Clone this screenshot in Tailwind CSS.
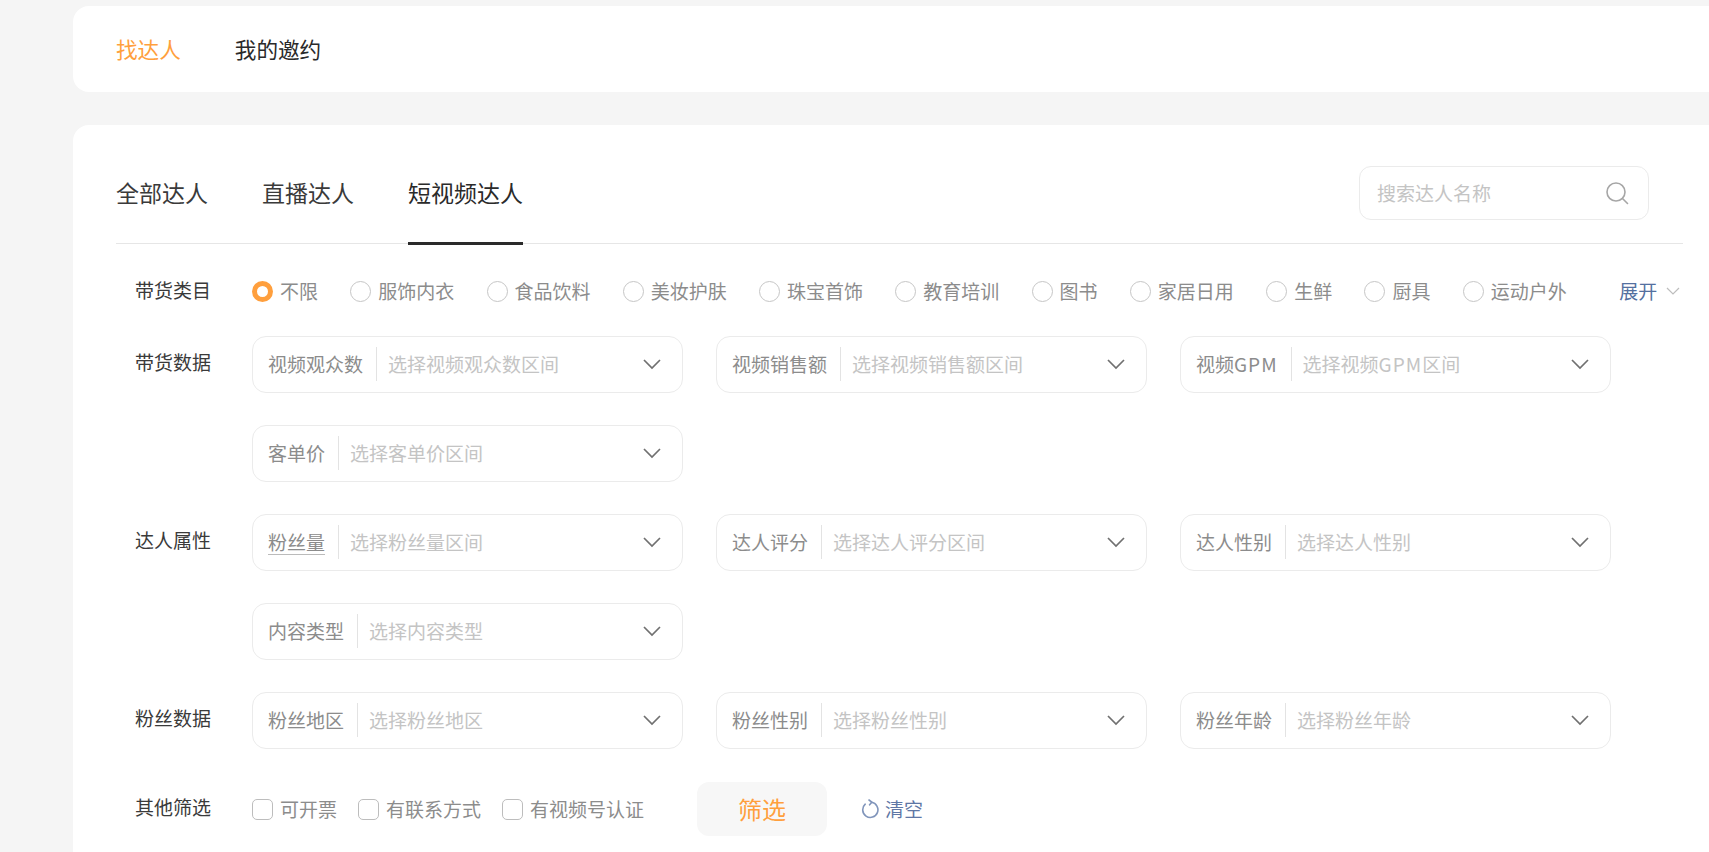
<!DOCTYPE html>
<html lang="zh">
<head>
<meta charset="utf-8">
<script src="https://cdn.jsdelivr.net/npm/@tailwindcss/browser@4"></script>
</head>
<body class="h-[852px] overflow-hidden bg-[#f5f5f5] font-['Noto_Sans_CJK_SC','Noto_Sans',sans-serif]">
<div class="h-full pl-[73px] pt-[6px] flex flex-col gap-[33px]">
  <!-- top tabs -->
  <div class="h-[86px] shrink-0 bg-white rounded-l-[16px] pl-[43px] flex items-center gap-[54px] text-[21.6px] leading-none">
    <span class="text-[#ff9f3d]">找达人</span>
    <span class="text-[#2a2a2a]">我的邀约</span>
  </div>
  <!-- main card -->
  <div class="flex-1 min-h-0 bg-white rounded-tl-[16px] pl-[43px] pt-[41px]">
    <div class="w-[1567px] h-[78px] border-b border-[#e6e6e6] flex items-start relative">
      <div class="flex gap-[54px] text-[23px] leading-[52px] text-[#3a3a3a]">
        <span>全部达人</span>
        <span>直播达人</span>
        <span class="relative text-[#2a2a2a] h-[78px]">短视频达人<span class="absolute left-0 right-0 bottom-[-1px] h-[3px] bg-[#2a2a2a]"></span></span>
      </div>
      <div class="ml-auto mr-[34px] w-[290px] h-[54px] border border-[#ebebeb] rounded-[12px] flex items-center justify-between pl-[17px] pr-[19px] text-[19px] text-[#c4c4c4]">
        <span>搜索达人名称</span>
        <svg class="w-[24px] h-[24px]" viewBox="0 0 24 24" fill="none" stroke="#a6a6a6" stroke-width="1.6" stroke-linecap="round"><circle cx="11" cy="11" r="9"/><path d="M17.5 17.5l5 5"/></svg>
      </div>
    </div>

    <div class="text-[19px] leading-[28px] text-[#3a3a3a]">
      <!-- category -->
      <div class="flex items-center mt-[33px]">
        <span class="w-[136px] pl-[19px] -mt-[3px]">带货类目</span>
        <div class="flex items-center gap-[32.25px] text-[#8c8c8c] h-[28px]">
          <label class="flex items-center gap-[7px]"><span class="w-[21px] h-[21px] rounded-full border-[5px] border-[#ff9f3d]"></span><span>不限</span></label>
          <label class="flex items-center gap-[7px]"><span class="w-[21px] h-[21px] rounded-full border-[1.5px] border-[#c6c6c6]"></span><span>服饰内衣</span></label>
          <label class="flex items-center gap-[7px]"><span class="w-[21px] h-[21px] rounded-full border-[1.5px] border-[#c6c6c6]"></span><span>食品饮料</span></label>
          <label class="flex items-center gap-[7px]"><span class="w-[21px] h-[21px] rounded-full border-[1.5px] border-[#c6c6c6]"></span><span>美妆护肤</span></label>
          <label class="flex items-center gap-[7px]"><span class="w-[21px] h-[21px] rounded-full border-[1.5px] border-[#c6c6c6]"></span><span>珠宝首饰</span></label>
          <label class="flex items-center gap-[7px]"><span class="w-[21px] h-[21px] rounded-full border-[1.5px] border-[#c6c6c6]"></span><span>教育培训</span></label>
          <label class="flex items-center gap-[7px]"><span class="w-[21px] h-[21px] rounded-full border-[1.5px] border-[#c6c6c6]"></span><span>图书</span></label>
          <label class="flex items-center gap-[7px]"><span class="w-[21px] h-[21px] rounded-full border-[1.5px] border-[#c6c6c6]"></span><span>家居日用</span></label>
          <label class="flex items-center gap-[7px]"><span class="w-[21px] h-[21px] rounded-full border-[1.5px] border-[#c6c6c6]"></span><span>生鲜</span></label>
          <label class="flex items-center gap-[7px]"><span class="w-[21px] h-[21px] rounded-full border-[1.5px] border-[#c6c6c6]"></span><span>厨具</span></label>
          <label class="flex items-center gap-[7px]"><span class="w-[21px] h-[21px] rounded-full border-[1.5px] border-[#c6c6c6]"></span><span>运动户外</span></label>
        </div>
        <div class="ml-[52.5px] flex items-center gap-[9px] text-[#54709f]">
          <span>展开</span>
          <svg class="w-[14px] h-[9px]" viewBox="0 0 14 9" fill="none" stroke="#bdbdbd" stroke-width="1.2"><path d="M1 1l6 6 6-6"/></svg>
        </div>
      </div>

      <!-- 带货数据 -->
      <div class="flex items-start mt-[31px]">
        <span class="w-[136px] pl-[19px] pt-[12px]">带货数据</span>
        <div class="grid grid-cols-[431px_431px_431px] gap-x-[33px] gap-y-[32px]">
          <div class="h-[57px] border border-[#ebebeb] rounded-[14px] flex items-center pl-[15px] pr-[21px] pb-[2px]"><span class="text-[#8c8c8c] whitespace-nowrap">视频观众数</span><span class="w-px h-[34px] bg-[#e3e3e3] ml-[13px] mr-[11px]"></span><span class="text-[#c4c4c4] whitespace-nowrap">选择视频观众数区间</span><svg class="ml-auto mt-[2px] w-[18px] h-[11px]" viewBox="0 0 18 11" fill="none" stroke="#707070" stroke-width="1.7"><path d="M1 1l8 8 8-8"/></svg></div>
          <div class="h-[57px] border border-[#ebebeb] rounded-[14px] flex items-center pl-[15px] pr-[21px] pb-[2px]"><span class="text-[#8c8c8c] whitespace-nowrap">视频销售额</span><span class="w-px h-[34px] bg-[#e3e3e3] ml-[13px] mr-[11px]"></span><span class="text-[#c4c4c4] whitespace-nowrap">选择视频销售额区间</span><svg class="ml-auto mt-[2px] w-[18px] h-[11px]" viewBox="0 0 18 11" fill="none" stroke="#707070" stroke-width="1.7"><path d="M1 1l8 8 8-8"/></svg></div>
          <div class="h-[57px] border border-[#ebebeb] rounded-[14px] flex items-center pl-[15px] pr-[21px] pb-[2px]"><span class="text-[#8c8c8c] whitespace-nowrap">视频<span class="tracking-[1px]">GPM</span></span><span class="w-px h-[34px] bg-[#e3e3e3] ml-[13px] mr-[11px]"></span><span class="text-[#c4c4c4] whitespace-nowrap">选择视频<span class="tracking-[1px]">GPM</span>区间</span><svg class="ml-auto mt-[2px] w-[18px] h-[11px]" viewBox="0 0 18 11" fill="none" stroke="#707070" stroke-width="1.7"><path d="M1 1l8 8 8-8"/></svg></div>
          <div class="h-[57px] border border-[#ebebeb] rounded-[14px] flex items-center pl-[15px] pr-[21px] pb-[2px]"><span class="text-[#8c8c8c] whitespace-nowrap">客单价</span><span class="w-px h-[34px] bg-[#e3e3e3] ml-[13px] mr-[11px]"></span><span class="text-[#c4c4c4] whitespace-nowrap">选择客单价区间</span><svg class="ml-auto mt-[2px] w-[18px] h-[11px]" viewBox="0 0 18 11" fill="none" stroke="#707070" stroke-width="1.7"><path d="M1 1l8 8 8-8"/></svg></div>
        </div>
      </div>

      <!-- 达人属性 -->
      <div class="flex items-start mt-[32px]">
        <span class="w-[136px] pl-[19px] pt-[12px]">达人属性</span>
        <div class="grid grid-cols-[431px_431px_431px] gap-x-[33px] gap-y-[32px]">
          <div class="h-[57px] border border-[#ebebeb] rounded-[14px] flex items-center pl-[15px] pr-[21px] pb-[2px]"><span class="text-[#8c8c8c] whitespace-nowrap underline underline-offset-4 decoration-[#bbb]">粉丝量</span><span class="w-px h-[34px] bg-[#e3e3e3] ml-[13px] mr-[11px]"></span><span class="text-[#c4c4c4] whitespace-nowrap">选择粉丝量区间</span><svg class="ml-auto mt-[2px] w-[18px] h-[11px]" viewBox="0 0 18 11" fill="none" stroke="#707070" stroke-width="1.7"><path d="M1 1l8 8 8-8"/></svg></div>
          <div class="h-[57px] border border-[#ebebeb] rounded-[14px] flex items-center pl-[15px] pr-[21px] pb-[2px]"><span class="text-[#8c8c8c] whitespace-nowrap">达人评分</span><span class="w-px h-[34px] bg-[#e3e3e3] ml-[13px] mr-[11px]"></span><span class="text-[#c4c4c4] whitespace-nowrap">选择达人评分区间</span><svg class="ml-auto mt-[2px] w-[18px] h-[11px]" viewBox="0 0 18 11" fill="none" stroke="#707070" stroke-width="1.7"><path d="M1 1l8 8 8-8"/></svg></div>
          <div class="h-[57px] border border-[#ebebeb] rounded-[14px] flex items-center pl-[15px] pr-[21px] pb-[2px]"><span class="text-[#8c8c8c] whitespace-nowrap">达人性别</span><span class="w-px h-[34px] bg-[#e3e3e3] ml-[13px] mr-[11px]"></span><span class="text-[#c4c4c4] whitespace-nowrap">选择达人性别</span><svg class="ml-auto mt-[2px] w-[18px] h-[11px]" viewBox="0 0 18 11" fill="none" stroke="#707070" stroke-width="1.7"><path d="M1 1l8 8 8-8"/></svg></div>
          <div class="h-[57px] border border-[#ebebeb] rounded-[14px] flex items-center pl-[15px] pr-[21px] pb-[2px]"><span class="text-[#8c8c8c] whitespace-nowrap">内容类型</span><span class="w-px h-[34px] bg-[#e3e3e3] ml-[13px] mr-[11px]"></span><span class="text-[#c4c4c4] whitespace-nowrap">选择内容类型</span><svg class="ml-auto mt-[2px] w-[18px] h-[11px]" viewBox="0 0 18 11" fill="none" stroke="#707070" stroke-width="1.7"><path d="M1 1l8 8 8-8"/></svg></div>
        </div>
      </div>

      <!-- 粉丝数据 -->
      <div class="flex items-start mt-[32px]">
        <span class="w-[136px] pl-[19px] pt-[12px]">粉丝数据</span>
        <div class="grid grid-cols-[431px_431px_431px] gap-x-[33px]">
          <div class="h-[57px] border border-[#ebebeb] rounded-[14px] flex items-center pl-[15px] pr-[21px] pb-[2px]"><span class="text-[#8c8c8c] whitespace-nowrap">粉丝地区</span><span class="w-px h-[34px] bg-[#e3e3e3] ml-[13px] mr-[11px]"></span><span class="text-[#c4c4c4] whitespace-nowrap">选择粉丝地区</span><svg class="ml-auto mt-[2px] w-[18px] h-[11px]" viewBox="0 0 18 11" fill="none" stroke="#707070" stroke-width="1.7"><path d="M1 1l8 8 8-8"/></svg></div>
          <div class="h-[57px] border border-[#ebebeb] rounded-[14px] flex items-center pl-[15px] pr-[21px] pb-[2px]"><span class="text-[#8c8c8c] whitespace-nowrap">粉丝性别</span><span class="w-px h-[34px] bg-[#e3e3e3] ml-[13px] mr-[11px]"></span><span class="text-[#c4c4c4] whitespace-nowrap">选择粉丝性别</span><svg class="ml-auto mt-[2px] w-[18px] h-[11px]" viewBox="0 0 18 11" fill="none" stroke="#707070" stroke-width="1.7"><path d="M1 1l8 8 8-8"/></svg></div>
          <div class="h-[57px] border border-[#ebebeb] rounded-[14px] flex items-center pl-[15px] pr-[21px] pb-[2px]"><span class="text-[#8c8c8c] whitespace-nowrap">粉丝年龄</span><span class="w-px h-[34px] bg-[#e3e3e3] ml-[13px] mr-[11px]"></span><span class="text-[#c4c4c4] whitespace-nowrap">选择粉丝年龄</span><svg class="ml-auto mt-[2px] w-[18px] h-[11px]" viewBox="0 0 18 11" fill="none" stroke="#707070" stroke-width="1.7"><path d="M1 1l8 8 8-8"/></svg></div>
        </div>
      </div>

      <!-- 其他筛选 -->
      <div class="flex items-center mt-[33px]">
        <span class="w-[136px] pl-[19px] -mt-[4px]">其他筛选</span>
        <div class="flex items-center gap-[21px] text-[#8c8c8c]">
          <label class="flex items-center gap-[7px]"><span class="w-[21px] h-[21px] rounded-[5px] border-[1.5px] border-[#bdbdbd]"></span><span>可开票</span></label>
          <label class="flex items-center gap-[7px]"><span class="w-[21px] h-[21px] rounded-[5px] border-[1.5px] border-[#bdbdbd]"></span><span>有联系方式</span></label>
          <label class="flex items-center gap-[7px]"><span class="w-[21px] h-[21px] rounded-[5px] border-[1.5px] border-[#bdbdbd]"></span><span>有视频号认证</span></label>
        </div>
        <button class="ml-[53px] w-[130px] h-[54px] rounded-[12px] bg-[#f7f7f7] text-[#ff9f3d] text-[24px]">筛选</button>
        <div class="ml-[34px] flex items-center gap-[6px] text-[#5f77a5]">
          <svg class="w-[18px] h-[20px]" viewBox="0 0 18 20" fill="none" stroke="#8095bb" stroke-width="1.6" stroke-linecap="round" stroke-linejoin="round"><path d="M4.2 5.2A7.6 7.6 0 1 0 10.5 3.3"/><path d="M8 1l2.8 2.2L8.6 5.8"/></svg>
          <span>清空</span>
        </div>
      </div>
    </div>
  </div>
</div>
</body>
</html>
